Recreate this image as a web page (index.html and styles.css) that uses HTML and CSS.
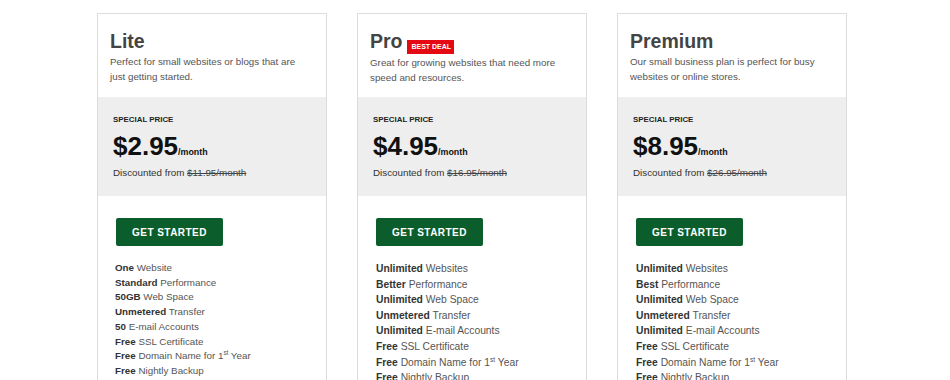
FILE: index.html
```html
<!DOCTYPE html>
<html lang="en">
<head>
<meta charset="utf-8">
<title>Hosting Plans</title>
<link rel="stylesheet" href="styles.css">
</head>
<body>
<div class="plans">
  <div class="card">
    <div class="head">
      <h2 class="title">Lite</h2>
      <p class="desc">Perfect for small websites or blogs that are just getting started.</p>
    </div>
    <div class="price-box">
      <div class="label">SPECIAL PRICE</div>
      <div class="price">$2.95<span class="per">/month</span></div>
      <div class="was">Discounted from <s>$11.95/month</s></div>
    </div>
    <div class="body">
      <a class="btn">GET STARTED</a>
      <ul class="features small">
        <li><b>One</b> Website</li>
        <li><b>Standard</b> Performance</li>
        <li><b>50GB</b> Web Space</li>
        <li><b>Unmetered</b> Transfer</li>
        <li><b>50</b> E-mail Accounts</li>
        <li><b>Free</b> SSL Certificate</li>
        <li><b>Free</b> Domain Name for 1<sup>st</sup> Year</li>
        <li><b>Free</b> Nightly Backup</li>
      </ul>
    </div>
  </div>
  <div class="card">
    <div class="head">
      <h2 class="title">Pro <span class="badge">BEST DEAL</span></h2>
      <p class="desc">Great for growing websites that need more speed and resources.</p>
    </div>
    <div class="price-box">
      <div class="label">SPECIAL PRICE</div>
      <div class="price">$4.95<span class="per">/month</span></div>
      <div class="was">Discounted from <s>$16.95/month</s></div>
    </div>
    <div class="body">
      <a class="btn">GET STARTED</a>
      <ul class="features">
        <li><b>Unlimited</b> Websites</li>
        <li><b>Better</b> Performance</li>
        <li><b>Unlimited</b> Web Space</li>
        <li><b>Unmetered</b> Transfer</li>
        <li><b>Unlimited</b> E-mail Accounts</li>
        <li><b>Free</b> SSL Certificate</li>
        <li><b>Free</b> Domain Name for 1<sup>st</sup> Year</li>
        <li><b>Free</b> Nightly Backup</li>
      </ul>
    </div>
  </div>
  <div class="card">
    <div class="head">
      <h2 class="title">Premium</h2>
      <p class="desc">Our small business plan is perfect for busy websites or online stores.</p>
    </div>
    <div class="price-box">
      <div class="label">SPECIAL PRICE</div>
      <div class="price">$8.95<span class="per">/month</span></div>
      <div class="was">Discounted from <s>$26.95/month</s></div>
    </div>
    <div class="body">
      <a class="btn">GET STARTED</a>
      <ul class="features">
        <li><b>Unlimited</b> Websites</li>
        <li><b>Best</b> Performance</li>
        <li><b>Unlimited</b> Web Space</li>
        <li><b>Unmetered</b> Transfer</li>
        <li><b>Unlimited</b> E-mail Accounts</li>
        <li><b>Free</b> SSL Certificate</li>
        <li><b>Free</b> Domain Name for 1<sup>st</sup> Year</li>
        <li><b>Free</b> Nightly Backup</li>
      </ul>
    </div>
  </div>
</div>
</body>
</html>
```
FILE: styles.css
```css
html, body {
  margin: 0;
  padding: 0;
  background: #fff;
  font-family: "Liberation Sans", Arial, sans-serif;
  color: #333;
  overflow: hidden;
}

.plans {
  display: flex;
  gap: 30px;
  margin-left: 97px;
  padding-top: 13px;
}

.card {
  width: 230px;
  height: 420px;
  box-sizing: border-box;
  border: 1px solid #dcdcdc;
  background: #fff;
}

.head {
  height: 83px;
  box-sizing: border-box;
  padding: 15px 12px 0 12px;
}

.title {
  margin: 0;
  font-size: 19.5px;
  line-height: 24px;
  font-weight: bold;
  color: #444;
}

.badge {
  display: inline-block;
  margin-left: -1px;
  padding: 0 3px 0 4.5px;
  background: #e50914;
  color: #fff;
  font-size: 7px;
  line-height: 14px;
  font-weight: bold;
  vertical-align: -1px;
}

.desc {
  margin: 1px 0 0 0;
  max-width: 195px;
  font-size: 9.8px;
  line-height: 15px;
  color: #555;
}

.price-box {
  height: 99px;
  box-sizing: border-box;
  background: #eeeeee;
  padding: 17px 15px 0 15px;
}

.label {
  font-size: 7.9px;
  line-height: 12px;
  font-weight: bold;
  color: #222;
}

.price {
  margin-top: 5px;
  font-size: 26px;
  line-height: 30px;
  font-weight: bold;
  color: #111;
}

.per {
  font-size: 8.9px;
}

.was {
  margin-top: -1px;
  font-size: 9.8px;
  line-height: 14px;
  color: #333;
}

.was s {
  color: #444;
}

.body {
  padding: 22px 17px 0 18px;
}

.btn {
  display: flex;
  align-items: center;
  justify-content: center;
  width: 107px;
  height: 28px;
  box-sizing: border-box;
  background: #0b5e2b;
  border-radius: 2px;
  color: #fff;
  font-size: 10px;
  font-weight: bold;
  letter-spacing: 0.45px;
}

.features {
  list-style: none;
  margin: 15px 0 0 0;
  padding: 0;
  font-size: 10.3px;
  line-height: 15.6px;
  color: #555;
}

.features.small {
  margin-top: 15px;
  margin-left: -1px;
  font-size: 9.8px;
  line-height: 14.7px;
}

.features b {
  color: #333;
}

.features sup {
  font-size: 0.65em;
  line-height: 0;
  vertical-align: 0.6em;
}
```
